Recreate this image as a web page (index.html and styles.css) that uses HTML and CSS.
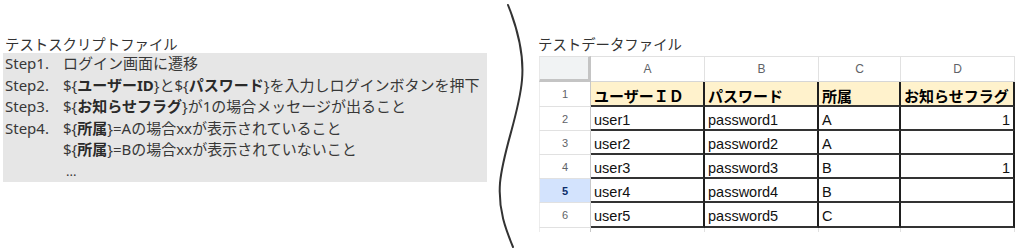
FILE: index.html
```html
<!DOCTYPE html>
<html lang="ja">
<head>
<meta charset="utf-8">
<title>テストスクリプトとテストデータ</title>
<link rel="stylesheet" href="styles.css">
</head>
<body>
<div class="page">
  <section class="script">
    <div class="caption">テストスクリプトファイル</div>
    <div class="steps">
      <span class="label">Step1.</span><span>ログイン画面に遷移</span>
      <span class="label">Step2.</span><span>${<b>ユーザーID</b>}と${<b>パスワード</b>}を入力しログインボタンを押下</span>
      <span class="label">Step3.</span><span>${<b>お知らせフラグ</b>}が1の場合メッセージが出ること</span>
      <span class="label">Step4.</span><span>${<b>所属</b>}=Aの場合xxが表示されていること</span>
      <span class="label"></span><span>${<b>所属</b>}=Bの場合xxが表示されていないこと</span>
      <span class="label"></span><span class="dots">...</span>
    </div>
  </section>

  <svg class="brace" width="40" height="250" viewBox="0 0 40 250" aria-hidden="true">
    <path d="M13,5 C25,35 29,58 27,80 C24,115 8,150 5,183 C3,210 11,230 18,247" fill="none" stroke="#333" stroke-width="2" stroke-linecap="round"/>
  </svg>

  <section class="data">
    <div class="caption">テストデータファイル</div>
    <div class="sheet">
      <div class="cell corner"></div>
      <div class="cell colhead">A</div>
      <div class="cell colhead">B</div>
      <div class="cell colhead">C</div>
      <div class="cell colhead">D</div>

      <div class="cell rowhead">1</div>
      <div class="cell hdr">ユーザーＩＤ</div>
      <div class="cell hdr">パスワード</div>
      <div class="cell hdr">所属</div>
      <div class="cell hdr">お知らせフラグ</div>

      <div class="cell rowhead">2</div>
      <div class="cell d">user1</div>
      <div class="cell d">password1</div>
      <div class="cell d">A</div>
      <div class="cell d num">1</div>

      <div class="cell rowhead">3</div>
      <div class="cell d">user2</div>
      <div class="cell d">password2</div>
      <div class="cell d">A</div>
      <div class="cell d num"></div>

      <div class="cell rowhead">4</div>
      <div class="cell d">user3</div>
      <div class="cell d">password3</div>
      <div class="cell d">B</div>
      <div class="cell d num">1</div>

      <div class="cell rowhead sel">5</div>
      <div class="cell d">user4</div>
      <div class="cell d">password4</div>
      <div class="cell d">B</div>
      <div class="cell d num"></div>

      <div class="cell rowhead">6</div>
      <div class="cell d">user5</div>
      <div class="cell d">password5</div>
      <div class="cell d">C</div>
      <div class="cell d num"></div>

      <div class="cell strip-head"></div>
      <div class="cell strip"></div>
      <div class="cell strip"></div>
      <div class="cell strip"></div>
      <div class="cell strip"></div>
    </div>
  </section>
</div>
</body>
</html>
```

FILE: styles.css
```css
html, body {
  margin: 0;
  padding: 0;
  background: #ffffff;
}

body {
  font-family: "Noto Sans", "Noto Sans CJK JP", sans-serif;
  color: #333333;
}

.page {
  display: flex;
  height: 250px;
  overflow: hidden;
}

.script {
  width: 495px;
  flex-shrink: 0;
  padding-top: 34px;
  box-sizing: border-box;
}

.caption {
  font-family: "Noto Sans CJK JP", "Noto Sans", sans-serif;
  font-size: 14.4px;
  line-height: 19px;
  height: 19px;
  white-space: nowrap;
  color: #333333;
}

.script .caption {
  padding-left: 5px;
}

.steps {
  margin-left: 3px;
  width: 484px;
  box-sizing: border-box;
  padding-left: 2px;
  background: #e6e6e6;
  display: grid;
  grid-template-columns: 58px 1fr;
  grid-auto-rows: 21.5px;
  font-size: 15px;
  line-height: 21.5px;
  white-space: nowrap;
  color: #383838;
}

.steps b {
  font-weight: 700;
  color: #2a2a2a;
}

.dots {
  padding-left: 3px;
  font-size: 13px;
}

.brace {
  display: block;
  flex-shrink: 0;
}

.data {
  padding-top: 34px;
  padding-left: 3px;
  box-sizing: border-box;
}

.sheet {
  margin-top: 3px;
  margin-left: 1px;
  display: grid;
  grid-template-columns: 52px 114px 114px 82px 114px;
  grid-template-rows: 26px 25px 24px 24px 24px 24px 25px 4px;
}

.cell {
  box-sizing: border-box;
  display: flex;
  align-items: center;
  overflow: hidden;
  white-space: nowrap;
}

.corner {
  background: #f1f3f4;
  border-top: 1px solid #e1e1e1;
  border-left: 1px solid #e8e8e8;
  border-right: 3px solid #c4c4c4;
  border-bottom: 3px solid #c4c4c4;
}

.colhead {
  justify-content: center;
  background: #ffffff;
  border-top: 1px solid #e1e1e1;
  border-right: 1px solid #e1e1e1;
  border-bottom: 1px solid #d6d6d6;
  font-family: "Liberation Sans", Arial, sans-serif;
  font-size: 12px;
  color: #5f6368;
}

.rowhead {
  justify-content: center;
  background: #ffffff;
  border-left: 1px solid #ececec;
  border-right: 1px solid #c8c8c8;
  border-bottom: 1px solid #e1e1e1;
  font-family: "Liberation Sans", Arial, sans-serif;
  font-size: 11px;
  color: #5f6368;
}

.rowhead.sel {
  background: #d3e3fd;
  color: #0b2e6b;
  font-weight: 700;
}

.hdr {
  background: #fff2cc;
  padding: 3px 0 0 3px;
  border-right: 2px solid #1f1f1f;
  border-bottom: 2px solid #333333;
  font-family: "Noto Sans CJK JP", sans-serif;
  font-weight: 700;
  font-size: 15px;
  color: #000000;
}

.d {
  background: #ffffff;
  padding: 3px 0 0 3px;
  border-right: 2px solid #1f1f1f;
  border-bottom: 2px solid #333333;
  font-family: "Liberation Sans", Arial, sans-serif;
  font-size: 14.5px;
  color: #111111;
}

.d.num {
  justify-content: flex-end;
  padding-right: 3px;
}

.strip-head {
  border-left: 1px solid #ececec;
  border-right: 1px solid #c8c8c8;
}

.strip {
  border-right: 1px solid #e1e1e1;
}
```
